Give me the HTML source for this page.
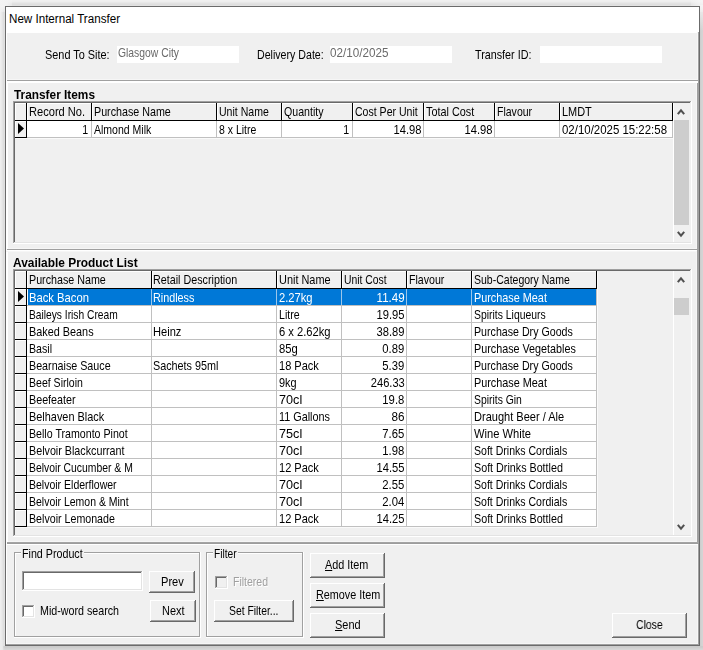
<!DOCTYPE html>
<html><head><meta charset="utf-8"><title>New Internal Transfer</title>
<style>
html,body{margin:0;padding:0}
body{width:703px;height:650px;overflow:hidden;position:relative;background:#f1f1f1;font-family:"Liberation Sans",sans-serif}
#sh{position:absolute;left:5px;top:6px;width:695px;height:640px;box-shadow:0 1px 7px 1px rgba(0,0,0,0.30)}
#r div,#r svg{position:absolute}
.t{position:absolute;white-space:nowrap;line-height:16px;height:16px;display:block}
</style></head><body>
<div id="r">
<div style="left:0px;top:0px;width:703px;height:1px;background:#f0f0f0"></div>
<div style="left:0px;top:1px;width:703px;height:1px;background:#eeeeee"></div>
<div style="left:0px;top:2px;width:703px;height:1px;background:#e8e8e8"></div>
<div style="left:0px;top:3px;width:703px;height:1px;background:#e2e2e2"></div>
<div style="left:0px;top:4px;width:703px;height:1px;background:#dedede"></div>
<div style="left:0px;top:5px;width:703px;height:1px;background:#e2e2e2"></div>
<div style="left:0px;top:4px;width:1px;height:646px;background:#eeeeee"></div>
<div style="left:1px;top:4px;width:1px;height:646px;background:#eaeaea"></div>
<div style="left:2px;top:4px;width:1px;height:646px;background:#e4e4e4"></div>
<div style="left:3px;top:4px;width:1px;height:646px;background:#dedede"></div>
<div style="left:4px;top:4px;width:1px;height:646px;background:#e0e0e0"></div>
<div style="left:700px;top:6px;width:1px;height:644px;background:#cecece"></div>
<div style="left:701px;top:6px;width:1px;height:644px;background:#d2d2d2"></div>
<div style="left:702px;top:6px;width:1px;height:644px;background:#d4d4d4"></div>
<div style="left:3px;top:646px;width:700px;height:1px;background:#cbcbcb"></div>
<div style="left:3px;top:647px;width:700px;height:1px;background:#cdcdcd"></div>
<div style="left:3px;top:648px;width:700px;height:1px;background:#d2d2d2"></div>
<div style="left:3px;top:649px;width:700px;height:1px;background:#d6d6d6"></div>
<div style="left:0;top:0;width:12px;height:12px;background:radial-gradient(circle at 0 0,#f4f4f4 0,#f2f2f2 45%,rgba(240,240,240,0) 100%)"></div>
<div style="left:700px;top:5px;width:3px;height:26px;background:linear-gradient(to bottom,#f4f4f4,#e8e8e8 25%,rgba(214,214,214,0) 100%)"></div>
<div style="left:0;top:640px;width:5px;height:10px;background:linear-gradient(to right,#ececec,rgba(226,226,226,0))"></div>
<div style="left:691px;top:0;width:12px;height:12px;background:radial-gradient(circle at 100% 0,#f6f6f6 0,rgba(244,244,244,0.7) 45%,rgba(240,240,240,0) 100%)"></div>
<div style="left:5px;top:6px;width:695px;height:640px;background:#6b6b6b"></div>
<div style="left:6px;top:7px;width:693px;height:25px;background:#ffffff"></div>
<div style="left:6px;top:32px;width:693px;height:613px;background:#f0f0f0"></div>
<div style="left:6px;top:32px;width:692px;height:1px;background:#ffffff"></div>
<div style="left:6px;top:32px;width:1px;height:613px;background:#ffffff"></div>
<div style="left:698px;top:32px;width:1px;height:613px;background:#a0a0a0"></div>
<div style="left:697px;top:32px;width:1px;height:612px;background:#f6f6f6"></div>
<div style="left:6px;top:644px;width:693px;height:1px;background:#a0a0a0"></div>
<div style="left:7px;top:643px;width:691px;height:1px;background:#f6f6f6"></div>
<div style="left:7px;top:81px;width:1px;height:461px;background:#ffffff"></div>
<div style="left:697px;top:83px;width:1px;height:459px;background:#a0a0a0"></div>
<div style="left:696px;top:83px;width:1px;height:459px;background:#f6f6f6"></div>
<div style="left:7px;top:79px;width:691px;height:1px;background:#f6f6f6"></div>
<div style="left:7px;top:80px;width:692px;height:1px;background:#a0a0a0"></div>
<div style="left:6px;top:81px;width:692px;height:1px;background:#ffffff"></div>
<div style="left:6px;top:82px;width:692px;height:1px;background:#ffffff"></div>
<div style="left:8px;top:248px;width:689px;height:1px;background:#f6f6f6"></div>
<div style="left:7px;top:249px;width:692px;height:1px;background:#a0a0a0"></div>
<div style="left:6px;top:250px;width:691px;height:1px;background:#ffffff"></div>
<div style="left:6px;top:251px;width:691px;height:1px;background:#f6f6f6"></div>
<div style="left:8px;top:541px;width:689px;height:1px;background:#f6f6f6"></div>
<div style="left:7px;top:542px;width:692px;height:1px;background:#a4a4a4"></div>
<div style="left:7px;top:543px;width:692px;height:1px;background:#9c9c9c"></div>
<div style="left:6px;top:544px;width:692px;height:1px;background:#ffffff"></div>
<div style="left:117px;top:46px;width:122px;height:17px;background:#ffffff"></div>
<div style="left:330px;top:46px;width:122px;height:17px;background:#ffffff"></div>
<div style="left:540px;top:46px;width:122px;height:17px;background:#ffffff"></div>
<div style="left:13px;top:101px;width:679px;height:143px;background:#f0f0f0"></div>
<div style="left:13px;top:101px;width:679px;height:1px;background:#a0a0a0"></div>
<div style="left:13px;top:101px;width:1px;height:143px;background:#a0a0a0"></div>
<div style="left:14px;top:102px;width:677px;height:1px;background:#696969"></div>
<div style="left:14px;top:102px;width:1px;height:141px;background:#696969"></div>
<div style="left:14px;top:242px;width:677px;height:1px;background:#e3e3e3"></div>
<div style="left:690px;top:102px;width:1px;height:141px;background:#e3e3e3"></div>
<div style="left:13px;top:243px;width:679px;height:1px;background:#ffffff"></div>
<div style="left:691px;top:101px;width:1px;height:143px;background:#ffffff"></div>
<div style="left:15px;top:103px;width:658px;height:1px;background:#ffffff"></div>
<div style="left:15px;top:120px;width:658px;height:1px;background:#000000"></div>
<div style="left:15px;top:103px;width:1px;height:17px;background:#ffffff"></div>
<div style="left:26px;top:103px;width:1px;height:18px;background:#000000"></div>
<div style="left:27px;top:103px;width:1px;height:17px;background:#ffffff"></div>
<div style="left:91px;top:103px;width:1px;height:18px;background:#000000"></div>
<div style="left:92px;top:103px;width:1px;height:17px;background:#ffffff"></div>
<div style="left:216px;top:103px;width:1px;height:18px;background:#000000"></div>
<div style="left:217px;top:103px;width:1px;height:17px;background:#ffffff"></div>
<div style="left:281px;top:103px;width:1px;height:18px;background:#000000"></div>
<div style="left:282px;top:103px;width:1px;height:17px;background:#ffffff"></div>
<div style="left:352px;top:103px;width:1px;height:18px;background:#000000"></div>
<div style="left:353px;top:103px;width:1px;height:17px;background:#ffffff"></div>
<div style="left:423px;top:103px;width:1px;height:18px;background:#000000"></div>
<div style="left:424px;top:103px;width:1px;height:17px;background:#ffffff"></div>
<div style="left:494px;top:103px;width:1px;height:18px;background:#000000"></div>
<div style="left:495px;top:103px;width:1px;height:17px;background:#ffffff"></div>
<div style="left:559px;top:103px;width:1px;height:18px;background:#000000"></div>
<div style="left:560px;top:103px;width:1px;height:17px;background:#ffffff"></div>
<div style="left:672px;top:103px;width:1px;height:18px;background:#000000"></div>
<div style="left:15px;top:121px;width:11px;height:16px;background:#f0f0f0"></div>
<div style="left:15px;top:121px;width:11px;height:1px;background:#ffffff"></div>
<div style="left:15px;top:121px;width:1px;height:16px;background:#ffffff"></div>
<div style="left:26px;top:121px;width:1px;height:17px;background:#000000"></div>
<div style="left:15px;top:137px;width:12px;height:1px;background:#000000"></div>
<div style="left:27px;top:121px;width:645px;height:16px;background:#ffffff"></div>
<div style="left:27px;top:137px;width:646px;height:1px;background:#c0c0c0"></div>
<div style="left:91px;top:121px;width:1px;height:17px;background:#c0c0c0"></div>
<div style="left:216px;top:121px;width:1px;height:17px;background:#c0c0c0"></div>
<div style="left:281px;top:121px;width:1px;height:17px;background:#c0c0c0"></div>
<div style="left:352px;top:121px;width:1px;height:17px;background:#c0c0c0"></div>
<div style="left:423px;top:121px;width:1px;height:17px;background:#c0c0c0"></div>
<div style="left:494px;top:121px;width:1px;height:17px;background:#c0c0c0"></div>
<div style="left:559px;top:121px;width:1px;height:17px;background:#c0c0c0"></div>
<div style="left:672px;top:121px;width:1px;height:17px;background:#c0c0c0"></div>
<div style="left:15px;top:138px;width:658px;height:1px;background:#fafafa"></div>
<div style="left:674px;top:103px;width:17px;height:139px;background:#f0f0f0"></div>
<div style="left:673px;top:103px;width:1px;height:139px;background:#ffffff"></div>
<div style="left:674px;top:120px;width:15px;height:105px;background:#cdcdcd"></div>
<svg style="left:18px;top:123px" width="6" height="11" viewBox="0 0 6 11"><polygon points="0,0 6,5.5 0,11" fill="#000"/></svg>
<svg style="left:676.3px;top:108px" width="10" height="8" viewBox="0 0 10 8"><polyline points="1.8,6.2 5,2.3 8.2,6.2" fill="none" stroke="#505050" stroke-width="2.0"/></svg>
<svg style="left:676.3px;top:230px" width="10" height="8" viewBox="0 0 10 8"><polyline points="1.8,1.8 5,5.7 8.2,1.8" fill="none" stroke="#505050" stroke-width="2.0"/></svg>
<div style="left:13px;top:269px;width:679px;height:268px;background:#f0f0f0"></div>
<div style="left:13px;top:269px;width:679px;height:1px;background:#a0a0a0"></div>
<div style="left:13px;top:269px;width:1px;height:268px;background:#a0a0a0"></div>
<div style="left:14px;top:270px;width:677px;height:1px;background:#696969"></div>
<div style="left:14px;top:270px;width:1px;height:266px;background:#696969"></div>
<div style="left:14px;top:535px;width:677px;height:1px;background:#e3e3e3"></div>
<div style="left:690px;top:270px;width:1px;height:266px;background:#e3e3e3"></div>
<div style="left:13px;top:536px;width:679px;height:1px;background:#ffffff"></div>
<div style="left:691px;top:269px;width:1px;height:268px;background:#ffffff"></div>
<div style="left:15px;top:271px;width:582px;height:1px;background:#ffffff"></div>
<div style="left:15px;top:288px;width:582px;height:1px;background:#000000"></div>
<div style="left:15px;top:271px;width:1px;height:17px;background:#ffffff"></div>
<div style="left:26px;top:271px;width:1px;height:18px;background:#000000"></div>
<div style="left:27px;top:271px;width:1px;height:17px;background:#ffffff"></div>
<div style="left:151px;top:271px;width:1px;height:18px;background:#000000"></div>
<div style="left:152px;top:271px;width:1px;height:17px;background:#ffffff"></div>
<div style="left:276px;top:271px;width:1px;height:18px;background:#000000"></div>
<div style="left:277px;top:271px;width:1px;height:17px;background:#ffffff"></div>
<div style="left:341px;top:271px;width:1px;height:18px;background:#000000"></div>
<div style="left:342px;top:271px;width:1px;height:17px;background:#ffffff"></div>
<div style="left:406px;top:271px;width:1px;height:18px;background:#000000"></div>
<div style="left:407px;top:271px;width:1px;height:17px;background:#ffffff"></div>
<div style="left:471px;top:271px;width:1px;height:18px;background:#000000"></div>
<div style="left:472px;top:271px;width:1px;height:17px;background:#ffffff"></div>
<div style="left:596px;top:271px;width:1px;height:18px;background:#000000"></div>
<div style="left:15px;top:289px;width:11px;height:16px;background:#f0f0f0"></div>
<div style="left:15px;top:289px;width:11px;height:1px;background:#ffffff"></div>
<div style="left:15px;top:289px;width:1px;height:16px;background:#ffffff"></div>
<div style="left:26px;top:289px;width:1px;height:17px;background:#000000"></div>
<div style="left:15px;top:305px;width:12px;height:1px;background:#000000"></div>
<div style="left:27px;top:289px;width:569px;height:16px;background:#ffffff"></div>
<div style="left:27px;top:305px;width:570px;height:1px;background:#c0c0c0"></div>
<div style="left:151px;top:289px;width:1px;height:17px;background:#c0c0c0"></div>
<div style="left:276px;top:289px;width:1px;height:17px;background:#c0c0c0"></div>
<div style="left:341px;top:289px;width:1px;height:17px;background:#c0c0c0"></div>
<div style="left:406px;top:289px;width:1px;height:17px;background:#c0c0c0"></div>
<div style="left:471px;top:289px;width:1px;height:17px;background:#c0c0c0"></div>
<div style="left:596px;top:289px;width:1px;height:17px;background:#c0c0c0"></div>
<div style="left:28px;top:289px;width:568px;height:16px;background:#0078d7"></div>
<div style="left:151px;top:289px;width:1px;height:16px;background:#9cc6ea"></div>
<div style="left:276px;top:289px;width:1px;height:16px;background:#9cc6ea"></div>
<div style="left:341px;top:289px;width:1px;height:16px;background:#9cc6ea"></div>
<div style="left:406px;top:289px;width:1px;height:16px;background:#9cc6ea"></div>
<div style="left:471px;top:289px;width:1px;height:16px;background:#9cc6ea"></div>
<div style="left:15px;top:306px;width:11px;height:16px;background:#f0f0f0"></div>
<div style="left:15px;top:306px;width:11px;height:1px;background:#ffffff"></div>
<div style="left:15px;top:306px;width:1px;height:16px;background:#ffffff"></div>
<div style="left:26px;top:306px;width:1px;height:17px;background:#000000"></div>
<div style="left:15px;top:322px;width:12px;height:1px;background:#000000"></div>
<div style="left:27px;top:306px;width:569px;height:16px;background:#ffffff"></div>
<div style="left:27px;top:322px;width:570px;height:1px;background:#c0c0c0"></div>
<div style="left:151px;top:306px;width:1px;height:17px;background:#c0c0c0"></div>
<div style="left:276px;top:306px;width:1px;height:17px;background:#c0c0c0"></div>
<div style="left:341px;top:306px;width:1px;height:17px;background:#c0c0c0"></div>
<div style="left:406px;top:306px;width:1px;height:17px;background:#c0c0c0"></div>
<div style="left:471px;top:306px;width:1px;height:17px;background:#c0c0c0"></div>
<div style="left:596px;top:306px;width:1px;height:17px;background:#c0c0c0"></div>
<div style="left:15px;top:323px;width:11px;height:16px;background:#f0f0f0"></div>
<div style="left:15px;top:323px;width:11px;height:1px;background:#ffffff"></div>
<div style="left:15px;top:323px;width:1px;height:16px;background:#ffffff"></div>
<div style="left:26px;top:323px;width:1px;height:17px;background:#000000"></div>
<div style="left:15px;top:339px;width:12px;height:1px;background:#000000"></div>
<div style="left:27px;top:323px;width:569px;height:16px;background:#ffffff"></div>
<div style="left:27px;top:339px;width:570px;height:1px;background:#c0c0c0"></div>
<div style="left:151px;top:323px;width:1px;height:17px;background:#c0c0c0"></div>
<div style="left:276px;top:323px;width:1px;height:17px;background:#c0c0c0"></div>
<div style="left:341px;top:323px;width:1px;height:17px;background:#c0c0c0"></div>
<div style="left:406px;top:323px;width:1px;height:17px;background:#c0c0c0"></div>
<div style="left:471px;top:323px;width:1px;height:17px;background:#c0c0c0"></div>
<div style="left:596px;top:323px;width:1px;height:17px;background:#c0c0c0"></div>
<div style="left:15px;top:340px;width:11px;height:16px;background:#f0f0f0"></div>
<div style="left:15px;top:340px;width:11px;height:1px;background:#ffffff"></div>
<div style="left:15px;top:340px;width:1px;height:16px;background:#ffffff"></div>
<div style="left:26px;top:340px;width:1px;height:17px;background:#000000"></div>
<div style="left:15px;top:356px;width:12px;height:1px;background:#000000"></div>
<div style="left:27px;top:340px;width:569px;height:16px;background:#ffffff"></div>
<div style="left:27px;top:356px;width:570px;height:1px;background:#c0c0c0"></div>
<div style="left:151px;top:340px;width:1px;height:17px;background:#c0c0c0"></div>
<div style="left:276px;top:340px;width:1px;height:17px;background:#c0c0c0"></div>
<div style="left:341px;top:340px;width:1px;height:17px;background:#c0c0c0"></div>
<div style="left:406px;top:340px;width:1px;height:17px;background:#c0c0c0"></div>
<div style="left:471px;top:340px;width:1px;height:17px;background:#c0c0c0"></div>
<div style="left:596px;top:340px;width:1px;height:17px;background:#c0c0c0"></div>
<div style="left:15px;top:357px;width:11px;height:16px;background:#f0f0f0"></div>
<div style="left:15px;top:357px;width:11px;height:1px;background:#ffffff"></div>
<div style="left:15px;top:357px;width:1px;height:16px;background:#ffffff"></div>
<div style="left:26px;top:357px;width:1px;height:17px;background:#000000"></div>
<div style="left:15px;top:373px;width:12px;height:1px;background:#000000"></div>
<div style="left:27px;top:357px;width:569px;height:16px;background:#ffffff"></div>
<div style="left:27px;top:373px;width:570px;height:1px;background:#c0c0c0"></div>
<div style="left:151px;top:357px;width:1px;height:17px;background:#c0c0c0"></div>
<div style="left:276px;top:357px;width:1px;height:17px;background:#c0c0c0"></div>
<div style="left:341px;top:357px;width:1px;height:17px;background:#c0c0c0"></div>
<div style="left:406px;top:357px;width:1px;height:17px;background:#c0c0c0"></div>
<div style="left:471px;top:357px;width:1px;height:17px;background:#c0c0c0"></div>
<div style="left:596px;top:357px;width:1px;height:17px;background:#c0c0c0"></div>
<div style="left:15px;top:374px;width:11px;height:16px;background:#f0f0f0"></div>
<div style="left:15px;top:374px;width:11px;height:1px;background:#ffffff"></div>
<div style="left:15px;top:374px;width:1px;height:16px;background:#ffffff"></div>
<div style="left:26px;top:374px;width:1px;height:17px;background:#000000"></div>
<div style="left:15px;top:390px;width:12px;height:1px;background:#000000"></div>
<div style="left:27px;top:374px;width:569px;height:16px;background:#ffffff"></div>
<div style="left:27px;top:390px;width:570px;height:1px;background:#c0c0c0"></div>
<div style="left:151px;top:374px;width:1px;height:17px;background:#c0c0c0"></div>
<div style="left:276px;top:374px;width:1px;height:17px;background:#c0c0c0"></div>
<div style="left:341px;top:374px;width:1px;height:17px;background:#c0c0c0"></div>
<div style="left:406px;top:374px;width:1px;height:17px;background:#c0c0c0"></div>
<div style="left:471px;top:374px;width:1px;height:17px;background:#c0c0c0"></div>
<div style="left:596px;top:374px;width:1px;height:17px;background:#c0c0c0"></div>
<div style="left:15px;top:391px;width:11px;height:16px;background:#f0f0f0"></div>
<div style="left:15px;top:391px;width:11px;height:1px;background:#ffffff"></div>
<div style="left:15px;top:391px;width:1px;height:16px;background:#ffffff"></div>
<div style="left:26px;top:391px;width:1px;height:17px;background:#000000"></div>
<div style="left:15px;top:407px;width:12px;height:1px;background:#000000"></div>
<div style="left:27px;top:391px;width:569px;height:16px;background:#ffffff"></div>
<div style="left:27px;top:407px;width:570px;height:1px;background:#c0c0c0"></div>
<div style="left:151px;top:391px;width:1px;height:17px;background:#c0c0c0"></div>
<div style="left:276px;top:391px;width:1px;height:17px;background:#c0c0c0"></div>
<div style="left:341px;top:391px;width:1px;height:17px;background:#c0c0c0"></div>
<div style="left:406px;top:391px;width:1px;height:17px;background:#c0c0c0"></div>
<div style="left:471px;top:391px;width:1px;height:17px;background:#c0c0c0"></div>
<div style="left:596px;top:391px;width:1px;height:17px;background:#c0c0c0"></div>
<div style="left:15px;top:408px;width:11px;height:16px;background:#f0f0f0"></div>
<div style="left:15px;top:408px;width:11px;height:1px;background:#ffffff"></div>
<div style="left:15px;top:408px;width:1px;height:16px;background:#ffffff"></div>
<div style="left:26px;top:408px;width:1px;height:17px;background:#000000"></div>
<div style="left:15px;top:424px;width:12px;height:1px;background:#000000"></div>
<div style="left:27px;top:408px;width:569px;height:16px;background:#ffffff"></div>
<div style="left:27px;top:424px;width:570px;height:1px;background:#c0c0c0"></div>
<div style="left:151px;top:408px;width:1px;height:17px;background:#c0c0c0"></div>
<div style="left:276px;top:408px;width:1px;height:17px;background:#c0c0c0"></div>
<div style="left:341px;top:408px;width:1px;height:17px;background:#c0c0c0"></div>
<div style="left:406px;top:408px;width:1px;height:17px;background:#c0c0c0"></div>
<div style="left:471px;top:408px;width:1px;height:17px;background:#c0c0c0"></div>
<div style="left:596px;top:408px;width:1px;height:17px;background:#c0c0c0"></div>
<div style="left:15px;top:425px;width:11px;height:16px;background:#f0f0f0"></div>
<div style="left:15px;top:425px;width:11px;height:1px;background:#ffffff"></div>
<div style="left:15px;top:425px;width:1px;height:16px;background:#ffffff"></div>
<div style="left:26px;top:425px;width:1px;height:17px;background:#000000"></div>
<div style="left:15px;top:441px;width:12px;height:1px;background:#000000"></div>
<div style="left:27px;top:425px;width:569px;height:16px;background:#ffffff"></div>
<div style="left:27px;top:441px;width:570px;height:1px;background:#c0c0c0"></div>
<div style="left:151px;top:425px;width:1px;height:17px;background:#c0c0c0"></div>
<div style="left:276px;top:425px;width:1px;height:17px;background:#c0c0c0"></div>
<div style="left:341px;top:425px;width:1px;height:17px;background:#c0c0c0"></div>
<div style="left:406px;top:425px;width:1px;height:17px;background:#c0c0c0"></div>
<div style="left:471px;top:425px;width:1px;height:17px;background:#c0c0c0"></div>
<div style="left:596px;top:425px;width:1px;height:17px;background:#c0c0c0"></div>
<div style="left:15px;top:442px;width:11px;height:16px;background:#f0f0f0"></div>
<div style="left:15px;top:442px;width:11px;height:1px;background:#ffffff"></div>
<div style="left:15px;top:442px;width:1px;height:16px;background:#ffffff"></div>
<div style="left:26px;top:442px;width:1px;height:17px;background:#000000"></div>
<div style="left:15px;top:458px;width:12px;height:1px;background:#000000"></div>
<div style="left:27px;top:442px;width:569px;height:16px;background:#ffffff"></div>
<div style="left:27px;top:458px;width:570px;height:1px;background:#c0c0c0"></div>
<div style="left:151px;top:442px;width:1px;height:17px;background:#c0c0c0"></div>
<div style="left:276px;top:442px;width:1px;height:17px;background:#c0c0c0"></div>
<div style="left:341px;top:442px;width:1px;height:17px;background:#c0c0c0"></div>
<div style="left:406px;top:442px;width:1px;height:17px;background:#c0c0c0"></div>
<div style="left:471px;top:442px;width:1px;height:17px;background:#c0c0c0"></div>
<div style="left:596px;top:442px;width:1px;height:17px;background:#c0c0c0"></div>
<div style="left:15px;top:459px;width:11px;height:16px;background:#f0f0f0"></div>
<div style="left:15px;top:459px;width:11px;height:1px;background:#ffffff"></div>
<div style="left:15px;top:459px;width:1px;height:16px;background:#ffffff"></div>
<div style="left:26px;top:459px;width:1px;height:17px;background:#000000"></div>
<div style="left:15px;top:475px;width:12px;height:1px;background:#000000"></div>
<div style="left:27px;top:459px;width:569px;height:16px;background:#ffffff"></div>
<div style="left:27px;top:475px;width:570px;height:1px;background:#c0c0c0"></div>
<div style="left:151px;top:459px;width:1px;height:17px;background:#c0c0c0"></div>
<div style="left:276px;top:459px;width:1px;height:17px;background:#c0c0c0"></div>
<div style="left:341px;top:459px;width:1px;height:17px;background:#c0c0c0"></div>
<div style="left:406px;top:459px;width:1px;height:17px;background:#c0c0c0"></div>
<div style="left:471px;top:459px;width:1px;height:17px;background:#c0c0c0"></div>
<div style="left:596px;top:459px;width:1px;height:17px;background:#c0c0c0"></div>
<div style="left:15px;top:476px;width:11px;height:16px;background:#f0f0f0"></div>
<div style="left:15px;top:476px;width:11px;height:1px;background:#ffffff"></div>
<div style="left:15px;top:476px;width:1px;height:16px;background:#ffffff"></div>
<div style="left:26px;top:476px;width:1px;height:17px;background:#000000"></div>
<div style="left:15px;top:492px;width:12px;height:1px;background:#000000"></div>
<div style="left:27px;top:476px;width:569px;height:16px;background:#ffffff"></div>
<div style="left:27px;top:492px;width:570px;height:1px;background:#c0c0c0"></div>
<div style="left:151px;top:476px;width:1px;height:17px;background:#c0c0c0"></div>
<div style="left:276px;top:476px;width:1px;height:17px;background:#c0c0c0"></div>
<div style="left:341px;top:476px;width:1px;height:17px;background:#c0c0c0"></div>
<div style="left:406px;top:476px;width:1px;height:17px;background:#c0c0c0"></div>
<div style="left:471px;top:476px;width:1px;height:17px;background:#c0c0c0"></div>
<div style="left:596px;top:476px;width:1px;height:17px;background:#c0c0c0"></div>
<div style="left:15px;top:493px;width:11px;height:16px;background:#f0f0f0"></div>
<div style="left:15px;top:493px;width:11px;height:1px;background:#ffffff"></div>
<div style="left:15px;top:493px;width:1px;height:16px;background:#ffffff"></div>
<div style="left:26px;top:493px;width:1px;height:17px;background:#000000"></div>
<div style="left:15px;top:509px;width:12px;height:1px;background:#000000"></div>
<div style="left:27px;top:493px;width:569px;height:16px;background:#ffffff"></div>
<div style="left:27px;top:509px;width:570px;height:1px;background:#c0c0c0"></div>
<div style="left:151px;top:493px;width:1px;height:17px;background:#c0c0c0"></div>
<div style="left:276px;top:493px;width:1px;height:17px;background:#c0c0c0"></div>
<div style="left:341px;top:493px;width:1px;height:17px;background:#c0c0c0"></div>
<div style="left:406px;top:493px;width:1px;height:17px;background:#c0c0c0"></div>
<div style="left:471px;top:493px;width:1px;height:17px;background:#c0c0c0"></div>
<div style="left:596px;top:493px;width:1px;height:17px;background:#c0c0c0"></div>
<div style="left:15px;top:510px;width:11px;height:16px;background:#f0f0f0"></div>
<div style="left:15px;top:510px;width:11px;height:1px;background:#ffffff"></div>
<div style="left:15px;top:510px;width:1px;height:16px;background:#ffffff"></div>
<div style="left:26px;top:510px;width:1px;height:17px;background:#000000"></div>
<div style="left:15px;top:526px;width:12px;height:1px;background:#000000"></div>
<div style="left:27px;top:510px;width:569px;height:16px;background:#ffffff"></div>
<div style="left:27px;top:526px;width:570px;height:1px;background:#c0c0c0"></div>
<div style="left:151px;top:510px;width:1px;height:17px;background:#c0c0c0"></div>
<div style="left:276px;top:510px;width:1px;height:17px;background:#c0c0c0"></div>
<div style="left:341px;top:510px;width:1px;height:17px;background:#c0c0c0"></div>
<div style="left:406px;top:510px;width:1px;height:17px;background:#c0c0c0"></div>
<div style="left:471px;top:510px;width:1px;height:17px;background:#c0c0c0"></div>
<div style="left:596px;top:510px;width:1px;height:17px;background:#c0c0c0"></div>
<div style="left:597px;top:272px;width:1px;height:256px;background:#fafafa"></div>
<div style="left:15px;top:527px;width:583px;height:1px;background:#fafafa"></div>
<div style="left:674px;top:271px;width:17px;height:264px;background:#f0f0f0"></div>
<div style="left:673px;top:271px;width:1px;height:264px;background:#ffffff"></div>
<div style="left:674px;top:298px;width:15px;height:17px;background:#cdcdcd"></div>
<svg style="left:18px;top:291px" width="6" height="11" viewBox="0 0 6 11"><polygon points="0,0 6,5.5 0,11" fill="#000"/></svg>
<svg style="left:676.3px;top:276px" width="10" height="8" viewBox="0 0 10 8"><polyline points="1.8,6.2 5,2.3 8.2,6.2" fill="none" stroke="#505050" stroke-width="2.0"/></svg>
<svg style="left:676.3px;top:523px" width="10" height="8" viewBox="0 0 10 8"><polyline points="1.8,1.8 5,5.7 8.2,1.8" fill="none" stroke="#505050" stroke-width="2.0"/></svg>
<div style="left:14px;top:552px;width:186px;height:1px;background:#a0a0a0"></div>
<div style="left:15px;top:553px;width:185px;height:1px;background:#ffffff"></div>
<div style="left:14px;top:552px;width:1px;height:85px;background:#a0a0a0"></div>
<div style="left:15px;top:553px;width:1px;height:83px;background:#ffffff"></div>
<div style="left:14px;top:636px;width:186px;height:1px;background:#a0a0a0"></div>
<div style="left:14px;top:637px;width:187px;height:1px;background:#ffffff"></div>
<div style="left:199px;top:552px;width:1px;height:85px;background:#a0a0a0"></div>
<div style="left:200px;top:552px;width:1px;height:86px;background:#ffffff"></div>
<div style="left:21px;top:552px;width:63px;height:2px;background:#f0f0f0"></div>
<div style="left:22px;top:571px;width:121px;height:20px;background:#ffffff"></div>
<div style="left:22px;top:571px;width:121px;height:1px;background:#a0a0a0"></div>
<div style="left:22px;top:571px;width:1px;height:20px;background:#a0a0a0"></div>
<div style="left:23px;top:572px;width:119px;height:1px;background:#696969"></div>
<div style="left:23px;top:572px;width:1px;height:18px;background:#696969"></div>
<div style="left:23px;top:589px;width:119px;height:1px;background:#e3e3e3"></div>
<div style="left:141px;top:572px;width:1px;height:18px;background:#e3e3e3"></div>
<div style="left:22px;top:590px;width:121px;height:1px;background:#ffffff"></div>
<div style="left:142px;top:571px;width:1px;height:20px;background:#ffffff"></div>
<div style="left:149px;top:571px;width:46px;height:22px;background:#f0f0f0"></div>
<div style="left:149px;top:571px;width:46px;height:1px;background:#ffffff"></div>
<div style="left:149px;top:571px;width:1px;height:22px;background:#ffffff"></div>
<div style="left:150px;top:591px;width:44px;height:1px;background:#a0a0a0"></div>
<div style="left:193px;top:572px;width:1px;height:20px;background:#a0a0a0"></div>
<div style="left:149px;top:592px;width:46px;height:1px;background:#696969"></div>
<div style="left:194px;top:571px;width:1px;height:22px;background:#696969"></div>
<div style="left:150px;top:600px;width:46px;height:22px;background:#f0f0f0"></div>
<div style="left:150px;top:600px;width:46px;height:1px;background:#ffffff"></div>
<div style="left:150px;top:600px;width:1px;height:22px;background:#ffffff"></div>
<div style="left:151px;top:620px;width:44px;height:1px;background:#a0a0a0"></div>
<div style="left:194px;top:601px;width:1px;height:20px;background:#a0a0a0"></div>
<div style="left:150px;top:621px;width:46px;height:1px;background:#696969"></div>
<div style="left:195px;top:600px;width:1px;height:22px;background:#696969"></div>
<div style="left:22px;top:605px;width:13px;height:13px;background:#ffffff"></div>
<div style="left:22px;top:605px;width:13px;height:1px;background:#a0a0a0"></div>
<div style="left:22px;top:605px;width:1px;height:13px;background:#a0a0a0"></div>
<div style="left:23px;top:606px;width:11px;height:1px;background:#696969"></div>
<div style="left:23px;top:606px;width:1px;height:11px;background:#696969"></div>
<div style="left:23px;top:616px;width:11px;height:1px;background:#e3e3e3"></div>
<div style="left:33px;top:606px;width:1px;height:11px;background:#e3e3e3"></div>
<div style="left:22px;top:617px;width:13px;height:1px;background:#ffffff"></div>
<div style="left:34px;top:605px;width:1px;height:13px;background:#ffffff"></div>
<div style="left:206px;top:552px;width:97px;height:1px;background:#a0a0a0"></div>
<div style="left:207px;top:553px;width:96px;height:1px;background:#ffffff"></div>
<div style="left:206px;top:552px;width:1px;height:85px;background:#a0a0a0"></div>
<div style="left:207px;top:553px;width:1px;height:83px;background:#ffffff"></div>
<div style="left:206px;top:636px;width:97px;height:1px;background:#a0a0a0"></div>
<div style="left:206px;top:637px;width:98px;height:1px;background:#ffffff"></div>
<div style="left:302px;top:552px;width:1px;height:85px;background:#a0a0a0"></div>
<div style="left:303px;top:552px;width:1px;height:86px;background:#ffffff"></div>
<div style="left:213px;top:552px;width:25px;height:2px;background:#f0f0f0"></div>
<div style="left:215px;top:576px;width:13px;height:13px;background:#f0f0f0"></div>
<div style="left:215px;top:576px;width:13px;height:1px;background:#a0a0a0"></div>
<div style="left:215px;top:576px;width:1px;height:13px;background:#a0a0a0"></div>
<div style="left:216px;top:577px;width:11px;height:1px;background:#696969"></div>
<div style="left:216px;top:577px;width:1px;height:11px;background:#696969"></div>
<div style="left:216px;top:587px;width:11px;height:1px;background:#e3e3e3"></div>
<div style="left:226px;top:577px;width:1px;height:11px;background:#e3e3e3"></div>
<div style="left:215px;top:588px;width:13px;height:1px;background:#ffffff"></div>
<div style="left:227px;top:576px;width:1px;height:13px;background:#ffffff"></div>
<div style="left:214px;top:600px;width:80px;height:22px;background:#f0f0f0"></div>
<div style="left:214px;top:600px;width:80px;height:1px;background:#ffffff"></div>
<div style="left:214px;top:600px;width:1px;height:22px;background:#ffffff"></div>
<div style="left:215px;top:620px;width:78px;height:1px;background:#a0a0a0"></div>
<div style="left:292px;top:601px;width:1px;height:20px;background:#a0a0a0"></div>
<div style="left:214px;top:621px;width:80px;height:1px;background:#696969"></div>
<div style="left:293px;top:600px;width:1px;height:22px;background:#696969"></div>
<div style="left:310px;top:553px;width:75px;height:25px;background:#f0f0f0"></div>
<div style="left:310px;top:553px;width:75px;height:1px;background:#ffffff"></div>
<div style="left:310px;top:553px;width:1px;height:25px;background:#ffffff"></div>
<div style="left:311px;top:576px;width:73px;height:1px;background:#a0a0a0"></div>
<div style="left:383px;top:554px;width:1px;height:23px;background:#a0a0a0"></div>
<div style="left:310px;top:577px;width:75px;height:1px;background:#696969"></div>
<div style="left:384px;top:553px;width:1px;height:25px;background:#696969"></div>
<div style="left:310px;top:583px;width:75px;height:25px;background:#f0f0f0"></div>
<div style="left:310px;top:583px;width:75px;height:1px;background:#ffffff"></div>
<div style="left:310px;top:583px;width:1px;height:25px;background:#ffffff"></div>
<div style="left:311px;top:606px;width:73px;height:1px;background:#a0a0a0"></div>
<div style="left:383px;top:584px;width:1px;height:23px;background:#a0a0a0"></div>
<div style="left:310px;top:607px;width:75px;height:1px;background:#696969"></div>
<div style="left:384px;top:583px;width:1px;height:25px;background:#696969"></div>
<div style="left:310px;top:613px;width:75px;height:25px;background:#f0f0f0"></div>
<div style="left:310px;top:613px;width:75px;height:1px;background:#ffffff"></div>
<div style="left:310px;top:613px;width:1px;height:25px;background:#ffffff"></div>
<div style="left:311px;top:636px;width:73px;height:1px;background:#a0a0a0"></div>
<div style="left:383px;top:614px;width:1px;height:23px;background:#a0a0a0"></div>
<div style="left:310px;top:637px;width:75px;height:1px;background:#696969"></div>
<div style="left:384px;top:613px;width:1px;height:25px;background:#696969"></div>
<div style="left:612px;top:613px;width:75px;height:25px;background:#f0f0f0"></div>
<div style="left:612px;top:613px;width:75px;height:1px;background:#ffffff"></div>
<div style="left:612px;top:613px;width:1px;height:25px;background:#ffffff"></div>
<div style="left:613px;top:636px;width:73px;height:1px;background:#a0a0a0"></div>
<div style="left:685px;top:614px;width:1px;height:23px;background:#a0a0a0"></div>
<div style="left:612px;top:637px;width:75px;height:1px;background:#696969"></div>
<div style="left:686px;top:613px;width:1px;height:25px;background:#696969"></div>
</div>
<div id="tt">
<span class="t" id="t0" style="left:9.4px;transform-origin:0 0;top:11px;font-size:12px;color:#000;transform:scaleX(0.9676)">New Internal Transfer</span>
</div>
<div id="tx" style="will-change:transform">
<span class="t" id="t1" style="left:45.0px;transform-origin:0 0;top:47px;font-size:13px;color:#000;transform:scaleX(0.8379)">Send To Site:</span>
<span class="t" id="t2" style="left:117.5px;transform-origin:0 0;top:45px;font-size:13px;color:#6a6a6a;transform:scaleX(0.7966)">Glasgow City</span>
<span class="t" id="t3" style="left:257.2px;transform-origin:0 0;top:47px;font-size:13px;color:#000;transform:scaleX(0.8170)">Delivery Date:</span>
<span class="t" id="t4" style="left:330.4px;transform-origin:0 0;top:45px;font-size:13px;color:#6a6a6a;transform:scaleX(0.8989)">02/10/2025</span>
<span class="t" id="t5" style="left:475.0px;transform-origin:0 0;top:47px;font-size:13px;color:#000;transform:scaleX(0.8275)">Transfer ID:</span>
<span class="t" id="t6" style="left:13.6px;transform-origin:0 0;top:87px;font-size:13px;color:#000;font-weight:bold;transform:scaleX(0.9114)">Transfer Items</span>
<span class="t" id="t7" style="left:28.8px;transform-origin:0 0;top:104px;font-size:13px;color:#000;transform:scaleX(0.8532)">Record No.</span>
<span class="t" id="t8" style="left:93.9px;transform-origin:0 0;top:104px;font-size:13px;color:#000;transform:scaleX(0.8239)">Purchase Name</span>
<span class="t" id="t9" style="left:219.4px;transform-origin:0 0;top:104px;font-size:13px;color:#000;transform:scaleX(0.8108)">Unit Name</span>
<span class="t" id="t10" style="left:283.6px;transform-origin:0 0;top:104px;font-size:13px;color:#000;transform:scaleX(0.8157)">Quantity</span>
<span class="t" id="t11" style="left:354.9px;transform-origin:0 0;top:104px;font-size:13px;color:#000;transform:scaleX(0.8110)">Cost Per Unit</span>
<span class="t" id="t12" style="left:426.3px;transform-origin:0 0;top:104px;font-size:13px;color:#000;transform:scaleX(0.8337)">Total Cost</span>
<span class="t" id="t13" style="left:497.0px;transform-origin:0 0;top:104px;font-size:13px;color:#000;transform:scaleX(0.8095)">Flavour</span>
<span class="t" id="t14" style="left:561.8px;transform-origin:0 0;top:104px;font-size:13px;color:#000;transform:scaleX(0.8420)">LMDT</span>
<span class="t" id="t15" style="right:614.6px;transform-origin:100% 0;top:122px;font-size:13px;color:#000;transform:scaleX(0.8200)">1</span>
<span class="t" id="t16" style="left:93.9px;transform-origin:0 0;top:122px;font-size:13px;color:#000;transform:scaleX(0.8094)">Almond Milk</span>
<span class="t" id="t17" style="left:219.4px;transform-origin:0 0;top:122px;font-size:13px;color:#000;transform:scaleX(0.8065)">8 x Litre</span>
<span class="t" id="t18" style="right:353.6px;transform-origin:100% 0;top:122px;font-size:13px;color:#000;transform:scaleX(0.8200)">1</span>
<span class="t" id="t19" style="right:281.2px;transform-origin:100% 0;top:122px;font-size:13px;color:#000;transform:scaleX(0.8603)">14.98</span>
<span class="t" id="t20" style="right:210.2px;transform-origin:100% 0;top:122px;font-size:13px;color:#000;transform:scaleX(0.8603)">14.98</span>
<span class="t" id="t21" style="left:561.8px;transform-origin:0 0;top:122px;font-size:13px;color:#000;transform:scaleX(0.8803)">02/10/2025 15:22:58</span>
<span class="t" id="t22" style="left:12.8px;transform-origin:0 0;top:255px;font-size:13px;color:#000;font-weight:bold;transform:scaleX(0.9165)">Available Product List</span>
<span class="t" id="t23" style="left:28.9px;transform-origin:0 0;top:272px;font-size:13px;color:#000;transform:scaleX(0.8239)">Purchase Name</span>
<span class="t" id="t24" style="left:153.2px;transform-origin:0 0;top:272px;font-size:13px;color:#000;transform:scaleX(0.8265)">Retail Description</span>
<span class="t" id="t25" style="left:278.8px;transform-origin:0 0;top:272px;font-size:13px;color:#000;transform:scaleX(0.8401)">Unit Name</span>
<span class="t" id="t26" style="left:344.4px;transform-origin:0 0;top:272px;font-size:13px;color:#000;transform:scaleX(0.7986)">Unit Cost</span>
<span class="t" id="t27" style="left:409.4px;transform-origin:0 0;top:272px;font-size:13px;color:#000;transform:scaleX(0.8164)">Flavour</span>
<span class="t" id="t28" style="left:474.0px;transform-origin:0 0;top:272px;font-size:13px;color:#000;transform:scaleX(0.8084)">Sub-Category Name</span>
<span class="t" id="t29" style="left:28.9px;transform-origin:0 0;top:290px;font-size:13px;color:#fff;transform:scaleX(0.8649)">Back Bacon</span>
<span class="t" id="t30" style="left:153.2px;transform-origin:0 0;top:290px;font-size:13px;color:#fff;transform:scaleX(0.8303)">Rindless</span>
<span class="t" id="t31" style="left:278.8px;transform-origin:0 0;top:290px;font-size:13px;color:#fff;transform:scaleX(0.8605)">2.27kg</span>
<span class="t" id="t32" style="right:298.4px;transform-origin:100% 0;top:290px;font-size:13px;color:#fff;transform:scaleX(0.8867)">11.49</span>
<span class="t" id="t33" style="left:474.0px;transform-origin:0 0;top:290px;font-size:13px;color:#fff;transform:scaleX(0.8337)">Purchase Meat</span>
<span class="t" id="t34" style="left:28.9px;transform-origin:0 0;top:307px;font-size:13px;color:#000;transform:scaleX(0.7870)">Baileys Irish Cream</span>
<span class="t" id="t35" style="left:278.8px;transform-origin:0 0;top:307px;font-size:13px;color:#000;transform:scaleX(0.8143)">Litre</span>
<span class="t" id="t36" style="right:298.4px;transform-origin:100% 0;top:307px;font-size:13px;color:#000;transform:scaleX(0.8603)">19.95</span>
<span class="t" id="t37" style="left:474.0px;transform-origin:0 0;top:307px;font-size:13px;color:#000;transform:scaleX(0.8001)">Spirits Liqueurs</span>
<span class="t" id="t38" style="left:28.9px;transform-origin:0 0;top:324px;font-size:13px;color:#000;transform:scaleX(0.8352)">Baked Beans</span>
<span class="t" id="t39" style="left:153.2px;transform-origin:0 0;top:324px;font-size:13px;color:#000;transform:scaleX(0.8541)">Heinz</span>
<span class="t" id="t40" style="left:278.8px;transform-origin:0 0;top:324px;font-size:13px;color:#000;transform:scaleX(0.8600)">6 x 2.62kg</span>
<span class="t" id="t41" style="right:298.4px;transform-origin:100% 0;top:324px;font-size:13px;color:#000;transform:scaleX(0.8603)">38.89</span>
<span class="t" id="t42" style="left:474.0px;transform-origin:0 0;top:324px;font-size:13px;color:#000;transform:scaleX(0.8187)">Purchase Dry Goods</span>
<span class="t" id="t43" style="left:28.9px;transform-origin:0 0;top:341px;font-size:13px;color:#000;transform:scaleX(0.8160)">Basil</span>
<span class="t" id="t44" style="left:278.8px;transform-origin:0 0;top:341px;font-size:13px;color:#000;transform:scaleX(0.8662)">85g</span>
<span class="t" id="t45" style="right:298.4px;transform-origin:100% 0;top:341px;font-size:13px;color:#000;transform:scaleX(0.8691)">0.89</span>
<span class="t" id="t46" style="left:474.0px;transform-origin:0 0;top:341px;font-size:13px;color:#000;transform:scaleX(0.8285)">Purchase Vegetables</span>
<span class="t" id="t47" style="left:28.9px;transform-origin:0 0;top:358px;font-size:13px;color:#000;transform:scaleX(0.8241)">Bearnaise Sauce</span>
<span class="t" id="t48" style="left:153.2px;transform-origin:0 0;top:358px;font-size:13px;color:#000;transform:scaleX(0.8303)">Sachets 95ml</span>
<span class="t" id="t49" style="left:278.8px;transform-origin:0 0;top:358px;font-size:13px;color:#000;transform:scaleX(0.8492)">18 Pack</span>
<span class="t" id="t50" style="right:298.4px;transform-origin:100% 0;top:358px;font-size:13px;color:#000;transform:scaleX(0.8691)">5.39</span>
<span class="t" id="t51" style="left:474.0px;transform-origin:0 0;top:358px;font-size:13px;color:#000;transform:scaleX(0.8187)">Purchase Dry Goods</span>
<span class="t" id="t52" style="left:28.9px;transform-origin:0 0;top:375px;font-size:13px;color:#000;transform:scaleX(0.8107)">Beef Sirloin</span>
<span class="t" id="t53" style="left:278.8px;transform-origin:0 0;top:375px;font-size:13px;color:#000;transform:scaleX(0.8393)">9kg</span>
<span class="t" id="t54" style="right:298.4px;transform-origin:100% 0;top:375px;font-size:13px;color:#000;transform:scaleX(0.8550)">246.33</span>
<span class="t" id="t55" style="left:474.0px;transform-origin:0 0;top:375px;font-size:13px;color:#000;transform:scaleX(0.8337)">Purchase Meat</span>
<span class="t" id="t56" style="left:28.9px;transform-origin:0 0;top:392px;font-size:13px;color:#000;transform:scaleX(0.8266)">Beefeater</span>
<span class="t" id="t57" style="left:278.8px;transform-origin:0 0;top:392px;font-size:13px;color:#000;transform:scaleX(0.9724)">70cl</span>
<span class="t" id="t58" style="right:298.4px;transform-origin:100% 0;top:392px;font-size:13px;color:#000;transform:scaleX(0.8691)">19.8</span>
<span class="t" id="t59" style="left:474.0px;transform-origin:0 0;top:392px;font-size:13px;color:#000;transform:scaleX(0.7987)">Spirits Gin</span>
<span class="t" id="t60" style="left:28.9px;transform-origin:0 0;top:409px;font-size:13px;color:#000;transform:scaleX(0.8391)">Belhaven Black</span>
<span class="t" id="t61" style="left:278.8px;transform-origin:0 0;top:409px;font-size:13px;color:#000;transform:scaleX(0.8335)">11 Gallons</span>
<span class="t" id="t62" style="right:298.4px;transform-origin:100% 0;top:409px;font-size:13px;color:#000;transform:scaleX(0.8985)">86</span>
<span class="t" id="t63" style="left:474.0px;transform-origin:0 0;top:409px;font-size:13px;color:#000;transform:scaleX(0.8491)">Draught Beer / Ale</span>
<span class="t" id="t64" style="left:28.9px;transform-origin:0 0;top:426px;font-size:13px;color:#000;transform:scaleX(0.8178)">Bello Tramonto Pinot</span>
<span class="t" id="t65" style="left:278.8px;transform-origin:0 0;top:426px;font-size:13px;color:#000;transform:scaleX(0.9724)">75cl</span>
<span class="t" id="t66" style="right:298.4px;transform-origin:100% 0;top:426px;font-size:13px;color:#000;transform:scaleX(0.8691)">7.65</span>
<span class="t" id="t67" style="left:474.0px;transform-origin:0 0;top:426px;font-size:13px;color:#000;transform:scaleX(0.8575)">Wine White</span>
<span class="t" id="t68" style="left:28.9px;transform-origin:0 0;top:443px;font-size:13px;color:#000;transform:scaleX(0.8261)">Belvoir Blackcurrant</span>
<span class="t" id="t69" style="left:278.8px;transform-origin:0 0;top:443px;font-size:13px;color:#000;transform:scaleX(0.9724)">70cl</span>
<span class="t" id="t70" style="right:298.4px;transform-origin:100% 0;top:443px;font-size:13px;color:#000;transform:scaleX(0.8691)">1.98</span>
<span class="t" id="t71" style="left:474.0px;transform-origin:0 0;top:443px;font-size:13px;color:#000;transform:scaleX(0.8113)">Soft Drinks Cordials</span>
<span class="t" id="t72" style="left:28.9px;transform-origin:0 0;top:460px;font-size:13px;color:#000;transform:scaleX(0.7982)">Belvoir Cucumber &amp; M</span>
<span class="t" id="t73" style="left:278.8px;transform-origin:0 0;top:460px;font-size:13px;color:#000;transform:scaleX(0.8492)">12 Pack</span>
<span class="t" id="t74" style="right:298.4px;transform-origin:100% 0;top:460px;font-size:13px;color:#000;transform:scaleX(0.8603)">14.55</span>
<span class="t" id="t75" style="left:474.0px;transform-origin:0 0;top:460px;font-size:13px;color:#000;transform:scaleX(0.8258)">Soft Drinks Bottled</span>
<span class="t" id="t76" style="left:28.9px;transform-origin:0 0;top:477px;font-size:13px;color:#000;transform:scaleX(0.8083)">Belvoir Elderflower</span>
<span class="t" id="t77" style="left:278.8px;transform-origin:0 0;top:477px;font-size:13px;color:#000;transform:scaleX(0.9724)">70cl</span>
<span class="t" id="t78" style="right:298.4px;transform-origin:100% 0;top:477px;font-size:13px;color:#000;transform:scaleX(0.8691)">2.55</span>
<span class="t" id="t79" style="left:474.0px;transform-origin:0 0;top:477px;font-size:13px;color:#000;transform:scaleX(0.8113)">Soft Drinks Cordials</span>
<span class="t" id="t80" style="left:28.9px;transform-origin:0 0;top:494px;font-size:13px;color:#000;transform:scaleX(0.8061)">Belvoir Lemon &amp; Mint</span>
<span class="t" id="t81" style="left:278.8px;transform-origin:0 0;top:494px;font-size:13px;color:#000;transform:scaleX(0.9724)">70cl</span>
<span class="t" id="t82" style="right:298.4px;transform-origin:100% 0;top:494px;font-size:13px;color:#000;transform:scaleX(0.8691)">2.04</span>
<span class="t" id="t83" style="left:474.0px;transform-origin:0 0;top:494px;font-size:13px;color:#000;transform:scaleX(0.8113)">Soft Drinks Cordials</span>
<span class="t" id="t84" style="left:28.9px;transform-origin:0 0;top:511px;font-size:13px;color:#000;transform:scaleX(0.8197)">Belvoir Lemonade</span>
<span class="t" id="t85" style="left:278.8px;transform-origin:0 0;top:511px;font-size:13px;color:#000;transform:scaleX(0.8492)">12 Pack</span>
<span class="t" id="t86" style="right:298.4px;transform-origin:100% 0;top:511px;font-size:13px;color:#000;transform:scaleX(0.8603)">14.25</span>
<span class="t" id="t87" style="left:474.0px;transform-origin:0 0;top:511px;font-size:13px;color:#000;transform:scaleX(0.8258)">Soft Drinks Bottled</span>
<span class="t" id="t88" style="left:22.2px;transform-origin:0 0;top:546px;font-size:13px;color:#000;transform:scaleX(0.8236)">Find Product</span>
<span class="t" id="t89" style="left:161.0px;transform-origin:0 0;top:574px;font-size:13px;color:#000;transform:scaleX(0.8528)">Prev</span>
<span class="t" id="t90" style="left:162.1px;transform-origin:0 0;top:603px;font-size:13px;color:#000;transform:scaleX(0.8416)">Next</span>
<span class="t" id="t91" style="left:39.8px;transform-origin:0 0;top:603px;font-size:13px;color:#000;transform:scaleX(0.8221)">Mid-word search</span>
<span class="t" id="t92" style="left:214.0px;transform-origin:0 0;top:546px;font-size:13px;color:#000;transform:scaleX(0.7857)">Filter</span>
<span class="t" id="t93" style="left:232.7px;transform-origin:0 0;top:574px;font-size:13px;color:#a0a0a0;text-shadow:1.2px 1px 0 #fff;transform:scaleX(0.8072)">Filtered</span>
<span class="t" id="t94" style="left:229.1px;transform-origin:0 0;top:603px;font-size:13px;color:#000;transform:scaleX(0.7966)">Set Filter...</span>
<span class="t" id="t95" style="left:325.2px;transform-origin:0 0;top:557px;font-size:13px;color:#000;transform:scaleX(0.8341)"><u>A</u>dd Item</span>
<span class="t" id="t96" style="left:315.6px;transform-origin:0 0;top:587px;font-size:13px;color:#000;transform:scaleX(0.8317)"><u>R</u>emove Item</span>
<span class="t" id="t97" style="left:334.8px;transform-origin:0 0;top:617px;font-size:13px;color:#000;transform:scaleX(0.8428)"><u>S</u>end</span>
<span class="t" id="t98" style="left:636.0px;transform-origin:0 0;top:617px;font-size:13px;color:#000;transform:scaleX(0.8030)">Close</span>
</div>
</body></html>
